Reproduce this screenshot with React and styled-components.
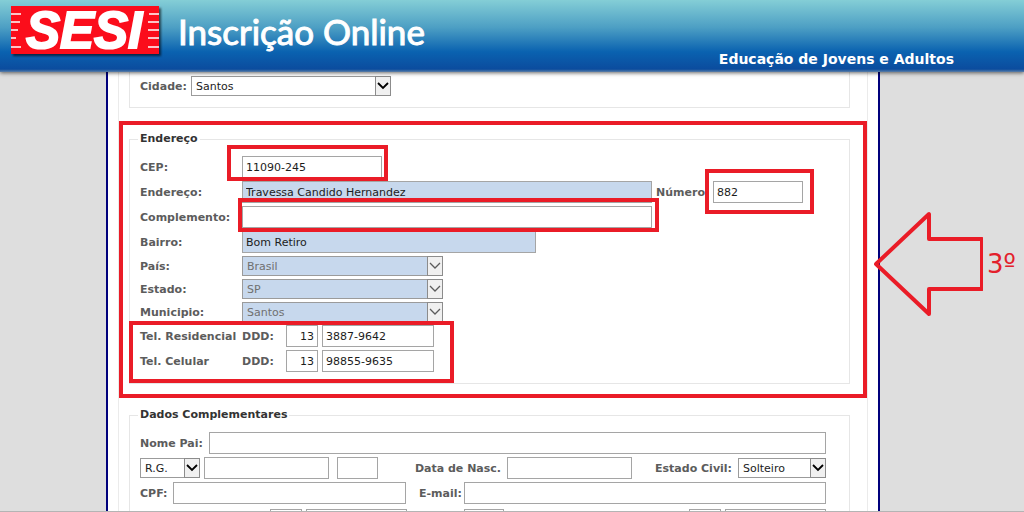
import React from "react";
import styled, { createGlobalStyle, css } from "styled-components";

const GlobalStyle = createGlobalStyle`
  * {
    box-sizing: border-box;
  }
  body {
    margin: 0;
    background: #dedede;
    color: #5c5c5c;
    font-family: "DejaVu Sans", Verdana, sans-serif;
    font-size: 11px;
  }
`;

const Page = styled.div`
  display: flex;
  flex-direction: column;
  height: 100vh;
  overflow: hidden;
  border-bottom: 1px solid #b4b4b4;
`;

const Header = styled.header`
  position: relative;
  z-index: 2;
  display: flex;
  flex: none;
  align-items: flex-start;
  gap: 19px;
  height: 72px;
  padding: 6px 70px 0 11px;
  color: #fff;
  background: linear-gradient(#84ced6 0%, #4d9fc4 38%, #0a62b0 72%, #0b4c9e 96%, #5c7fa8 100%);
  box-shadow: 0 1px 4px rgba(0, 0, 0, 0.6);
`;

const Logo = styled.svg`
  flex: none;
  width: 148px;
  height: 48px;
  overflow: visible;
  filter: drop-shadow(2px 2px 1px rgba(0, 0, 0, 0.6));
`;

const Title = styled.h1`
  flex: 1;
  margin: 0;
  font-family: Lato, sans-serif;
  font-size: 35px;
  font-weight: 400;
  line-height: 50px;
  -webkit-text-stroke: 1px #fff;
`;

const Subtitle = styled.p`
  margin: 0;
  align-self: flex-end;
  font-size: 14px;
  font-weight: bold;
  line-height: 26px;
`;

const Main = styled.main`
  flex: none;
  padding: 0 38px 0 0;
`;

const Panel = styled.div`
  width: 100%;
  max-width: 774px;
  margin: 0 auto;
  padding: 0 10px;
  background: #fff;
  border: solid #00007c;
  border-width: 0 2px;
`;

const Frame = styled.form`
  display: flex;
  flex-direction: column;
  gap: 24px;
  padding: 0 17px 60px 10px;
  border: solid #ebebeb;
  border-width: 0 1px;
`;

const Section = styled.div`
  position: relative;
`;

const Fieldset = styled.fieldset`
  display: block;
  min-width: 0;
  margin: 0;
  padding: ${({ $flush }) => ($flush ? "4px 10px 11px" : "10px 10px 11px")};
  border: 1px solid #e6e6e6;
  ${({ $flush }) => $flush && css`border-top: 0;`}
`;

const Legend = styled.legend`
  padding: 0 2px;
  margin-left: -2px;
  color: #333;
  font-weight: bold;
  line-height: 14px;
`;

const Rows = styled.div`
  display: flex;
  flex-direction: column;
  gap: 3px;
  width: ${({ $fit }) => ($fit ? "fit-content" : "auto")};
  position: relative;
`;

const Row = styled.div`
  display: flex;
  align-items: center;
  gap: 4px;
  min-height: ${({ $tall }) => ($tall ? "26px" : "0")};
`;

const Label = styled.label`
  flex: none;
  width: ${({ $width }) => ($width ? `${$width}px` : "auto")};
  margin-right: ${({ $width }) => ($width ? "-4px" : "2px")};
  font-weight: bold;
  white-space: nowrap;
`;

const Spacer = styled.span`
  flex: ${({ $width }) => ($width === undefined ? "1" : `0 0 ${$width}px`)};
`;

const Field = styled.div`
  position: relative;
  display: flex;
  flex: ${({ $width }) => ($width ? `0 0 ${$width}px` : "1")};
`;

const Input = styled.input`
  width: 100%;
  height: 22px;
  padding: 0 3px;
  border: 1px solid #a5a5a5;
  border-radius: 0;
  outline: none;
  background: ${({ readOnly }) => (readOnly ? "#c7d8ed" : "#fff")};
  color: #1c1c1c;
  font: inherit;
  text-align: ${({ $align }) => $align || "left"};
`;

const SelectBox = styled.select`
  appearance: none;
  width: 100%;
  height: 20px;
  padding: 0 20px 0 4px;
  border: 1px solid #9b9b9b;
  border-radius: 0;
  background: #fff;
  color: #1c1c1c;
  font: inherit;
  opacity: 1;
  &:disabled {
    background: #c7d8ed;
    color: #707070;
  }
`;

const SelectButton = styled.span`
  position: absolute;
  top: 0;
  right: 0;
  display: grid;
  place-items: center;
  width: 16px;
  height: 20px;
  border: 1px solid #8c8c8c;
  background: #f0f0f0;
  color: ${({ $muted }) => ($muted ? "#5c5c5c" : "#000")};
  pointer-events: none;
`;

const Highlight = styled.span`
  position: absolute;
  inset: ${({ $inset }) => $inset};
  z-index: 1;
  border: 4px solid #ea1c27;
  pointer-events: none;
`;

const StepMark = styled.div`
  position: absolute;
  top: 79px;
  left: calc(100% + 21px);
  z-index: 1;
  display: flex;
  align-items: center;
  gap: 4px;
  color: #e3202b;
  font-size: 26px;
  line-height: 1;
`;

const Select = ({ id, value, width, disabled, label }) => (
  <Field $width={width}>
    <SelectBox id={id} defaultValue={value} disabled={disabled} aria-label={label}>
      <option>{value}</option>
    </SelectBox>
    <SelectButton $muted={disabled}>
      <svg width="12" height="8" viewBox="0 0 12 8" fill="none">
        <path d="M1 1 L6 6 L11 1" stroke="currentColor" strokeWidth={disabled ? 1.3 : 1.8} />
      </svg>
    </SelectButton>
  </Field>
);

const SesiLogo = () => (
  <Logo viewBox="0 0 148 48" role="img" aria-label="SESI">
    <rect width="148" height="48" fill="#fb0d1b" />
    <path
      d="M0 8h10M0 16h9M0 24h7M0 32h5M0 41h10M138 8h10M137 16h11M137 24h11M137 32h11M137 41h11"
      stroke="#fff"
      strokeWidth="1.5"
    />
    <text
      x="73"
      y="42"
      fill="#fff"
      stroke="#fff"
      strokeWidth="2"
      textAnchor="middle"
      fontFamily="Liberation Sans, Arial, sans-serif"
      fontSize="51"
      fontWeight="bold"
      fontStyle="italic"
    >
      SESI
    </text>
  </Logo>
);

const locationFields = [
  { id: "pais", label: "País:", value: "Brasil" },
  { id: "estado", label: "Estado:", value: "SP" },
  { id: "municipio", label: "Municipio:", value: "Santos" },
];

const phones = [
  { id: "residencial", label: "Tel. Residencial", ddd: "13", number: "3887-9642" },
  { id: "celular", label: "Tel. Celular", ddd: "13", number: "98855-9635" },
];

const App = () => {
  return (
    <Page>
      <GlobalStyle />
      <Header>
        <SesiLogo />
        <Title>Inscrição Online</Title>
        <Subtitle>Educação de Jovens e Adultos</Subtitle>
      </Header>
      <Main>
        <Panel>
          <Frame>
            <Fieldset $flush>
              <Row>
                <Label htmlFor="cidade" $width={51}>Cidade:</Label>
                <Select id="cidade" value="Santos" width={200} />
              </Row>
            </Fieldset>

            <Section>
              <Fieldset>
                <Legend>Endereço</Legend>
                <Rows>
                  <Row>
                    <Label htmlFor="cep" $width={102}>CEP:</Label>
                    <Field $width={140}>
                      <Input id="cep" defaultValue="11090-245" />
                      <Highlight $inset="-11px -6px -3px -15px" />
                    </Field>
                  </Row>
                  <Row>
                    <Label htmlFor="endereco" $width={102}>Endereço:</Label>
                    <Field $width={410}>
                      <Input id="endereco" defaultValue="Travessa Candido Hernandez" readOnly />
                    </Field>
                    <Label htmlFor="numero" $width={57}>Número:</Label>
                    <Field $width={90}>
                      <Input id="numero" defaultValue="882" />
                      <Highlight $inset="-12px -11px -11px -8px" />
                    </Field>
                  </Row>
                  <Row>
                    <Label htmlFor="complemento" $width={102}>Complemento:</Label>
                    <Field $width={410}>
                      <Input id="complemento" />
                      <Highlight $inset="-8px -7px -4px -4px" />
                    </Field>
                  </Row>
                  <Row>
                    <Label htmlFor="bairro" $width={102}>Bairro:</Label>
                    <Field $width={294}>
                      <Input id="bairro" defaultValue="Bom Retiro" readOnly />
                    </Field>
                  </Row>
                  {locationFields.map((field) => (
                    <Row key={field.id}>
                      <Label htmlFor={field.id} $width={102}>{field.label}</Label>
                      <Select id={field.id} value={field.value} width={201} disabled />
                    </Row>
                  ))}
                  <Rows $fit>
                    {phones.map((phone) => (
                      <Row key={phone.id}>
                        <Label htmlFor={phone.id} $width={102}>{phone.label}</Label>
                        <Label htmlFor={`ddd-${phone.id}`} $width={44}>DDD:</Label>
                        <Field $width={32}>
                          <Input id={`ddd-${phone.id}`} defaultValue={phone.ddd} $align="right" />
                        </Field>
                        <Field $width={112}>
                          <Input id={phone.id} defaultValue={phone.number} />
                        </Field>
                      </Row>
                    ))}
                    <Highlight $inset="-4px -20px -11px -11px" />
                  </Rows>
                </Rows>
              </Fieldset>
              <Highlight $inset="-11px -17px -14px -10px" />
              <StepMark>
                <svg width="112" height="106" viewBox="0 0 112 106" fill="none">
                  <path
                    d="M5 53 L58 3 V28 H111 V78 H58 V103 Z"
                    stroke="#ea1c27"
                    strokeWidth="4"
                    strokeLinejoin="round"
                    overflow="visible"
                  />
                </svg>
                <span>3º</span>
              </StepMark>
            </Section>

            <Fieldset>
              <Legend>Dados Complementares</Legend>
              <Rows>
                <Row>
                  <Label htmlFor="pai">Nome Pai:</Label>
                  <Field>
                    <Input id="pai" />
                  </Field>
                  <Spacer $width={9} />
                </Row>
                <Row>
                  <Select label="Tipo de documento" value="R.G." width={60} />
                  <Field $width={125}>
                    <Input aria-label="Número do documento" />
                  </Field>
                  <Spacer $width={0} />
                  <Field $width={41}>
                    <Input aria-label="Órgão emissor" />
                  </Field>
                  <Spacer />
                  <Label htmlFor="nascimento">Data de Nasc.</Label>
                  <Field $width={125}>
                    <Input id="nascimento" />
                  </Field>
                  <Spacer $width={15} />
                  <Label htmlFor="civil">Estado Civil:</Label>
                  <Select id="civil" value="Solteiro" width={88} />
                  <Spacer $width={9} />
                </Row>
                <Row>
                  <Label htmlFor="cpf">CPF:</Label>
                  <Field $width={233}>
                    <Input id="cpf" />
                  </Field>
                  <Spacer />
                  <Label htmlFor="email" $width={45}>E-mail:</Label>
                  <Field $width={362}>
                    <Input id="email" type="email" />
                  </Field>
                  <Spacer $width={9} />
                </Row>
                <Row $tall>
                  <Spacer $width={126} />
                  <Field $width={32}>
                    <Input aria-label="DDD residencial" />
                  </Field>
                  <Field $width={101}>
                    <Input aria-label="Telefone residencial" />
                  </Field>
                  <Spacer $width={49} />
                  <Field $width={40}>
                    <Input aria-label="DDD comercial" />
                  </Field>
                  <Spacer />
                  <Field $width={32}>
                    <Input aria-label="DDD celular" />
                  </Field>
                  <Field $width={101}>
                    <Input aria-label="Telefone celular" />
                  </Field>
                  <Spacer $width={9} />
                </Row>
              </Rows>
            </Fieldset>
          </Frame>
        </Panel>
      </Main>
    </Page>
  );
};

export default App;
